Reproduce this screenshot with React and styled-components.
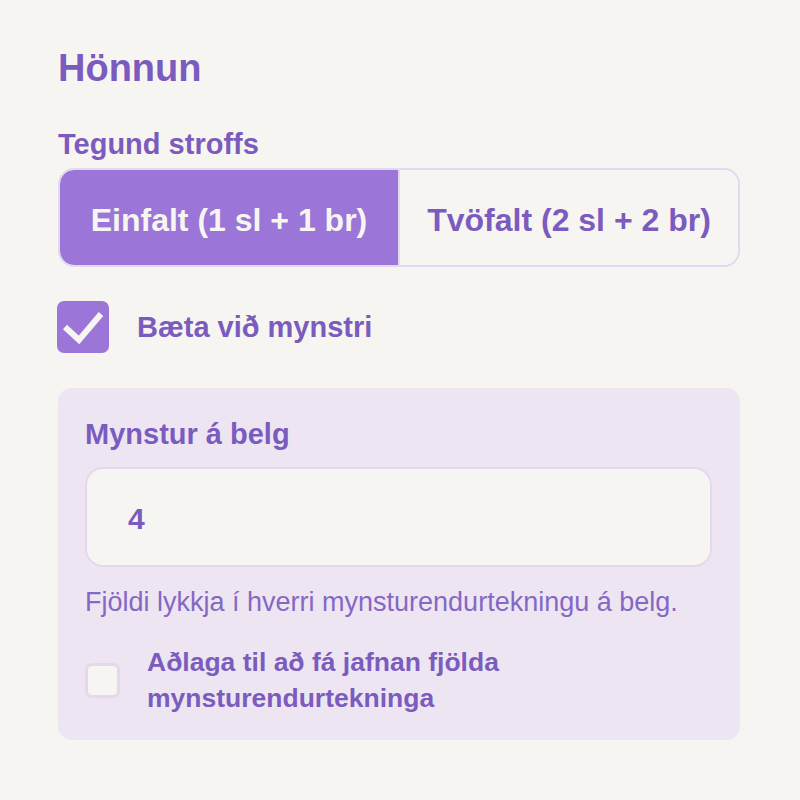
import React, { useState } from 'react';
import styled, { createGlobalStyle } from 'styled-components';

const GlobalStyle = createGlobalStyle`
  html, body {
    margin: 0;
    padding: 0;
    background: #f7f5f1;
  }
  body {
    font-family: "Liberation Sans", Arial, Helvetica, sans-serif;
    color: #7b5cbe;
  }
`;

const Page = styled.div`
  width: 682px;
  padding: 45px 60px 40px 58px;
`;

const Title = styled.h1`
  margin: 0;
  font-size: 38px;
  line-height: 46px;
  font-weight: 700;
  color: #7b5cbe;
`;

const FieldLabel = styled.div`
  margin-top: ${props => props.marginTop || '0'};
  font-size: 29px;
  line-height: 35px;
  font-weight: 700;
  color: #7b5cbe;
`;

const Segmented = styled.div`
  display: flex;
  margin-top: 6px;
  border: 2px solid #e4d8f0;
  border-radius: 16px;
  overflow: hidden;
`;

const Segment = styled.button`
  flex: 1;
  border: none;
  border-left: ${props => (props.first ? 'none' : '2px solid #e4d8f0')};
  border-radius: ${props => (props.first ? '14px 0 0 14px' : '0 14px 14px 0')};
  background: ${props => (props.active ? '#9b75d7' : '#f7f5f1')};
  color: ${props => (props.active ? '#f7f5f1' : '#7b5cbe')};
  font-family: inherit;
  font-size: 32px;
  line-height: 38px;
  font-weight: 700;
  padding: 31px 0 26px;
  cursor: pointer;
`;

const CheckRow = styled.label`
  display: flex;
  align-items: center;
  gap: ${props => props.gap || '28px'};
  margin-top: ${props => props.marginTop || '0'};
  cursor: pointer;
`;

const BigBox = styled.span`
  flex: none;
  width: 52px;
  height: 52px;
  margin-left: -1px;
  border-radius: 7px;
  background: ${props => (props.checked ? '#9b75d7' : '#f7f5f1')};
  display: flex;
  align-items: center;
  justify-content: center;
`;

const SmallBox = styled.span`
  flex: none;
  width: 29px;
  height: 29px;
  border: 3px solid #e4d8f0;
  border-radius: 7px;
  background: #f7f5f1;
`;

const CheckText = styled.span`
  font-size: ${props => props.size || '29px'};
  line-height: ${props => props.lineHeight || '35px'};
  font-weight: 700;
  color: #7b5cbe;
`;

const Panel = styled.section`
  margin-top: 35px;
  background: #ede6f2;
  border-radius: 14px;
  padding: 29px 28px 24px 27px;
`;

const NumberInput = styled.input`
  display: block;
  box-sizing: border-box;
  width: 100%;
  height: 100px;
  margin-top: 15px;
  border: 2px solid #e4d8f0;
  border-radius: 18px;
  background: #f7f5f1;
  padding: 4px 0 0 41px;
  font-family: inherit;
  font-size: 30px;
  font-weight: 700;
  color: #7b5cbe;
  outline: none;
`;

const Helper = styled.p`
  margin: 19px 0 0;
  font-size: 27px;
  line-height: 32px;
  font-weight: 400;
  color: #8568c4;
`;

const CheckIcon = () => (
  <svg width="52" height="52" viewBox="0 0 52 52">
    <path d="M8 26 L22 39 L44 13" fill="none" stroke="#f7f5f1" strokeWidth="6" />
  </svg>
);

export default function App() {
  const [type, setType] = useState('single');
  const [pattern, setPattern] = useState(true);
  const [even, setEven] = useState(false);
  const [reps, setReps] = useState('4');

  return (
    <>
      <GlobalStyle />
      <Page>
        <Title>Hönnun</Title>

        <FieldLabel marginTop="36px">Tegund stroffs</FieldLabel>
        <Segmented>
          <Segment first active={type === 'single'} onClick={() => setType('single')}>
            Einfalt (1 sl + 1 br)
          </Segment>
          <Segment active={type === 'double'} onClick={() => setType('double')}>
            Tvöfalt (2 sl + 2 br)
          </Segment>
        </Segmented>

        <CheckRow marginTop="34px" onClick={() => setPattern(!pattern)}>
          <BigBox checked={pattern}>{pattern && <CheckIcon />}</BigBox>
          <CheckText>Bæta við mynstri</CheckText>
        </CheckRow>

        {pattern && (
          <Panel>
            <FieldLabel>Mynstur á belg</FieldLabel>
            <NumberInput value={reps} onChange={e => setReps(e.target.value)} />
            <Helper>Fjöldi lykkja í hverri mynsturendurtekningu á belg.</Helper>
            <CheckRow gap="27px" marginTop="26px" onClick={() => setEven(!even)}>
              <SmallBox />
              <CheckText size="26.5px" lineHeight="36px">
                Aðlaga til að fá jafnan fjölda mynsturendurtekninga
              </CheckText>
            </CheckRow>
          </Panel>
        )}
      </Page>
    </>
  );
}
